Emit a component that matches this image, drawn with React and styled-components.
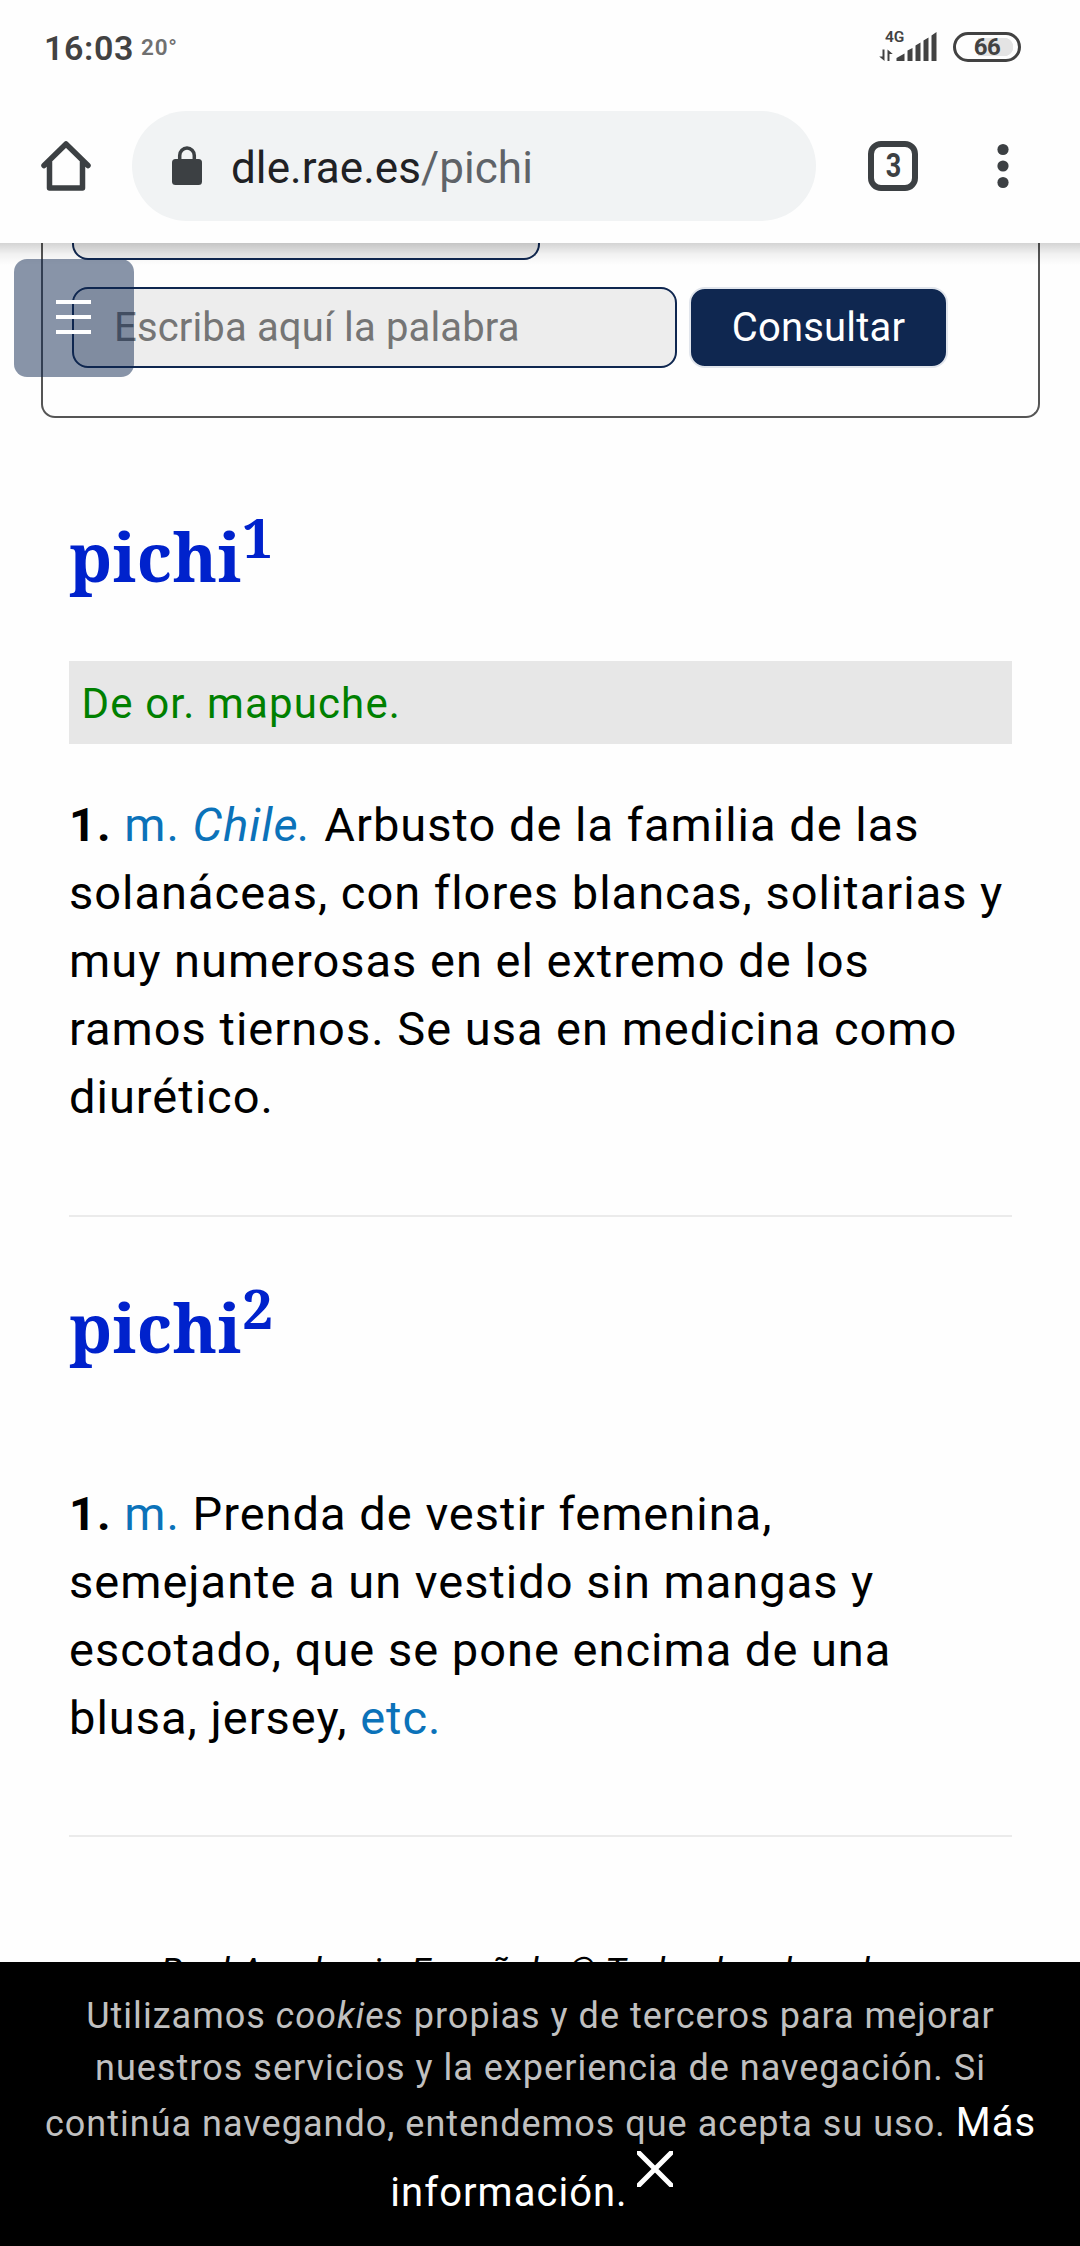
import React from "react";
import styled, { createGlobalStyle } from "styled-components";

const Global = createGlobalStyle`
  * { box-sizing: border-box; }
  body { margin: 0; background: #fefefe; font-family: Roboto, "Liberation Sans", sans-serif; color: #000; }
`;

const Screen = styled.div`
  position: relative;
  display: flex;
  flex-direction: column;
  width: 1080px;
  height: 2246px;
  overflow: hidden;
  background: #fefefe;
`;

const StatusBar = styled.header`
  display: flex;
  align-items: flex-start;
  justify-content: space-between;
  flex: none;
  height: 111px;
  padding: 28px 59px 0 44px;
  color: #424242;
`;

const StatusGroup = styled.div`
  display: flex;
  align-items: flex-start;
`;

const Clock = styled.span`
  width: 97px;
  font-size: 34px;
  font-weight: 600;
  line-height: 40px;
  letter-spacing: 0.6px;
`;

const Temperature = styled.span`
  font-size: 22.5px;
  font-weight: 600;
  line-height: 38px;
  letter-spacing: 0.8px;
  color: #707070;
`;

const Battery = styled.div`
  display: flex;
  align-items: center;
  justify-content: center;
  width: 68px;
  height: 30px;
  margin: 4px 0 0 16px;
  border: 3px solid #424242;
  border-radius: 15px;
  background: linear-gradient(#e4e4e4, #e4e4e4) 22px 3px / 26px 18px no-repeat,
    radial-gradient(circle at 48px 12px, #e4e4e4 9px, transparent 9.5px);
  font-size: 24px;
  font-weight: 700;
  line-height: 24px;
  letter-spacing: -0.6px;
`;

const Toolbar = styled.nav`
  display: flex;
  align-items: center;
  flex: none;
  height: 132px;
  padding: 0 68px 22px 41px;
`;

const AddressPill = styled.div`
  display: flex;
  align-items: center;
  width: 684px;
  height: 110px;
  margin: 0 52px 0 41px;
  padding-left: 40px;
  border-radius: 55px;
  background: #f1f3f4;
`;

const Url = styled.span`
  margin: 4px 0 0 29px;
  font-size: 44px;
  line-height: 52px;
  letter-spacing: 0.06px;
  color: #202124;
`;

const UrlPath = styled.span`
  color: #5f6368;
`;

const TabCount = styled.div`
  display: flex;
  align-items: center;
  justify-content: center;
  width: 50px;
  height: 50px;
  margin-right: 79px;
  border: 6px solid #3c4043;
  border-radius: 13px;
  font: 700 33px/36px Roboto, sans-serif;
  color: #3c4043;
`;

const TabDigit = styled.span`
  transform: scaleX(0.82);
`;

const Page = styled.main`
  position: relative;
  display: flex;
  flex-direction: column;
  flex: 1;
  overflow: hidden;
`;

const ToolbarShadow = styled.div`
  position: absolute;
  top: 0;
  left: 0;
  right: 0;
  height: 22px;
  background: linear-gradient(rgba(0, 0, 0, 0.17), rgba(0, 0, 0, 0.05) 50%, rgba(0, 0, 0, 0));
`;

const SearchForm = styled.form`
  flex: none;
  width: 999px;
  height: 175px;
  margin-left: 41px;
  padding-left: 29px;
  border: 2px solid #555;
  border-top: 0;
  border-radius: 0 0 14px 14px;
`;

const ModeSelect = styled.div`
  width: 468px;
  height: 17px;
  border: 2px solid #0f2750;
  border-top: 0;
  border-radius: 0 0 16px 16px;
  background: #ededed;
`;

const SearchRow = styled.div`
  display: flex;
  gap: 12px;
  margin-top: 27px;
`;

const WordInput = styled.input`
  width: 605px;
  height: 81px;
  padding: 0 0 0 40px;
  border: 2px solid #0f2750;
  border-radius: 16px;
  background: #ededed;
  font: 400 40px Roboto, sans-serif;
  letter-spacing: 0.15px;
  outline: none;
  &::placeholder { color: #757575; opacity: 1; }
`;

const SubmitButton = styled.button`
  width: 259px;
  height: 81px;
  padding: 0;
  border: 2px solid #e1e5ec;
  border-radius: 16px;
  background: #0f2750;
  color: #fff;
  font: 400 40px Roboto, sans-serif;
  letter-spacing: 0.2px;
`;

const MenuButton = styled.div`
  position: absolute;
  left: 14px;
  top: 16px;
  display: flex;
  flex-direction: column;
  gap: 11px;
  width: 120px;
  height: 118px;
  padding: 41px 0 0 42px;
  border-radius: 13px;
  background: rgba(15, 39, 80, 0.49);
`;

const MenuBar = styled.span`
  width: 35px;
  height: 4px;
  background: #fff;
`;

const Article = styled.article`
  display: flex;
  flex-direction: column;
  flex: none;
  height: ${(p) => p.$height}px;
  margin: 0 68px 0 69px;
  border-bottom: 2px solid #ebebeb;
`;

const Headword = styled.h1`
  margin: 0;
  height: ${(p) => p.$height}px;
  padding-top: ${(p) => p.$top}px;
  font: 700 67px/80px "Noto Serif", "Droid Serif", "DejaVu Serif Condensed", "DejaVu Serif", serif;
  letter-spacing: 0.5px;
  color: #0022cc;
`;

const Homograph = styled.sup`
  font-size: 55px;
  line-height: 0;
  vertical-align: 24px;
`;

const Etymology = styled.p`
  height: 83px;
  margin: 0 0 47px;
  padding: 1px 0 0 12.5px;
  background: #e7e7e7;
  color: #008000;
  font-size: 42px;
  line-height: 83px;
  letter-spacing: 1.15px;
`;

const Definition = styled.p`
  margin: 0;
  padding-right: 8px;
  font-size: 47px;
  line-height: 68px;
  letter-spacing: 1px;
`;

const Abbr = styled.span`
  color: #0b72b9;
`;

const Copyright = styled.p`
  margin: 109px 0 0;
  padding-left: 1px;
  text-align: center;
  font-size: 36px;
  font-style: italic;
  line-height: 52px;
  letter-spacing: 0.62px;
`;

const CookieNotice = styled.aside`
  position: absolute;
  left: 0;
  right: 0;
  bottom: 0;
  height: 284px;
  padding: 28px 0 0 1px;
  background: #000;
  color: #c0c0c0;
  font-size: 36px;
  letter-spacing: 1.02px;
  text-align: center;
`;

const CookieLine = styled.div`
  height: ${(p) => p.$height}px;
  line-height: 52px;
  white-space: nowrap;
`;

const LinkLine = styled.div`
  display: flex;
  align-items: flex-start;
  justify-content: center;
  gap: 9px;
  padding-right: 18px;
  line-height: 52px;
`;

const MoreLink = styled.a`
  color: #fff;
  font-size: 40px;
`;

const CloseIcon = styled.svg`
  flex: none;
  margin-top: -16px;
`;

export default function App() {
  return (
    <Screen>
      <Global />
      <StatusBar>
        <StatusGroup>
          <Clock>16:03</Clock>
          <Temperature>20°</Temperature>
        </StatusGroup>
        <StatusGroup>
          <svg width="58" height="36" viewBox="0 0 58 36" fill="#424242">
            <text x="6" y="14" fontFamily="Roboto, sans-serif" fontSize="15.5" fontWeight="600">4G</text>
            <path d="M3.5 21.500h2v11.500l-5.300-4.500h3.300zM8.500 33v-11.500l5.300 4.500h-3.300v7z" />
            <path d="M17.500 33v-3l8-4.500v7.500zM28.500 33v-10.500l5-2.500v13zM36.500 33v-15.500l5-3v18.500zM44.500 33v-20.500l5-3v23.500zM52.500 33v-25.500l5-3.500v29z" />
          </svg>
          <Battery>66</Battery>
        </StatusGroup>
      </StatusBar>
      <Toolbar>
        <svg width="50" height="52" viewBox="0 0 50 52" fill="none" stroke="#3c4043" strokeWidth="5.500" strokeLinejoin="round" strokeLinecap="round">
          <path d="M3 25.500L25 4L47 25.500M8.500 22v26h33v-26" />
        </svg>
        <AddressPill>
          <svg width="30" height="40" viewBox="0 0 30 40">
            <rect y="13" width="30" height="26" rx="3.500" fill="#3c4043" />
            <path d="M7.700 14V9.500a7.300 7.500 0 0 1 14.600 0V14" fill="none" stroke="#3c4043" strokeWidth="3.500" />
          </svg>
          <Url>dle.rae.es<UrlPath>/pichi</UrlPath></Url>
        </AddressPill>
        <TabCount><TabDigit>3</TabDigit></TabCount>
        <svg width="12" height="46" viewBox="0 0 12 46" fill="#3c4043">
          <circle cx="6" cy="6.500" r="5.600" />
          <circle cx="6" cy="23" r="5.600" />
          <circle cx="6" cy="39.500" r="5.600" />
        </svg>
      </Toolbar>
      <Page>
        <SearchForm>
          <ModeSelect />
          <SearchRow>
            <WordInput placeholder="Escriba aquí la palabra" />
            <SubmitButton type="button">Consultar</SubmitButton>
          </SearchRow>
        </SearchForm>
        <Article $height={799}>
          <Headword $height={243} $top={98}>pichi<Homograph>1</Homograph></Headword>
          <Etymology>De or. mapuche.</Etymology>
          <Definition>
            <b>1.</b> <Abbr>m.</Abbr> <Abbr as="i">Chile.</Abbr> Arbusto de la familia de las solanáceas, con flores blancas, solitarias y muy numerosas en el extremo de los ramos tiernos. Se usa en medicina como diurético.
          </Definition>
        </Article>
        <Article $height={620}>
          <Headword $height={263} $top={70}>pichi<Homograph>2</Homograph></Headword>
          <Definition>
            <b>1.</b> <Abbr>m.</Abbr> Prenda de vestir femenina, semejante a un vestido sin mangas y escotado, que se pone encima de una blusa, jersey, <Abbr>etc.</Abbr>
          </Definition>
        </Article>
        <Copyright>Real Academia Española © Todos los derechos</Copyright>
        <ToolbarShadow />
        <MenuButton>
          <MenuBar />
          <MenuBar />
          <MenuBar />
        </MenuButton>
      </Page>
      <CookieNotice>
        <CookieLine $height={52}>Utilizamos <i>cookies</i> propias y de terceros para mejorar</CookieLine>
        <CookieLine $height={55}>nuestros servicios y la experiencia de navegación. Si</CookieLine>
        <CookieLine $height={70}>continúa navegando, entendemos que acepta su uso. <MoreLink>Más</MoreLink></CookieLine>
        <LinkLine>
          <MoreLink>información.</MoreLink>
          <CloseIcon width="36" height="36" viewBox="0 0 36 36" stroke="#fff" strokeWidth="5">
            <path d="M0 0L36 36M36 0L0 36" />
          </CloseIcon>
        </LinkLine>
      </CookieNotice>
    </Screen>
  );
}
